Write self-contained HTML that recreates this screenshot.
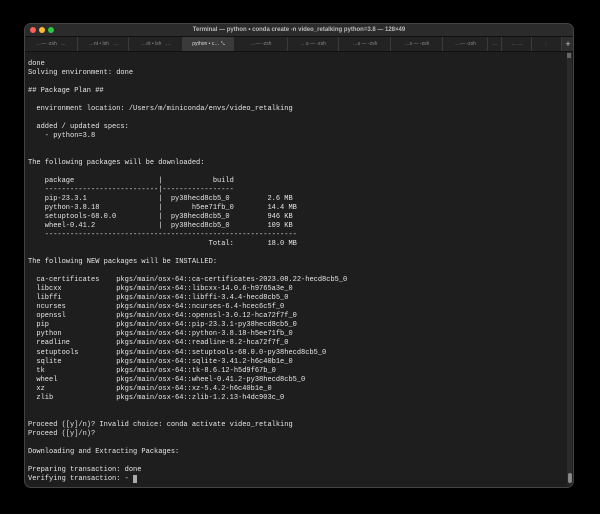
<!DOCTYPE html>
<html><head><style>
body{margin:0;background:#000;width:600px;height:514px;overflow:hidden;font-family:"Liberation Sans",sans-serif}
.win{position:absolute;left:25px;top:24px;width:548px;height:463px;background:#1e1e1e;border-radius:6px;overflow:hidden;box-shadow:0 0 0 1px #444}
.title{height:12px;background:#2b2b2b;color:#bbb;font-size:6px;text-align:center;line-height:12px;font-weight:bold}
.dot{position:absolute;top:3px;width:6px;height:6px;border-radius:50%}
.tabs{position:absolute;top:12px;left:0;right:0;height:14px;background:#232323;border-bottom:1px solid #111;border-top:1px solid #111}
.tab{position:absolute;top:0;height:14px;border-left:1px solid #3a3a3a;color:#888;font-size:5px;line-height:14px;text-align:center}
pre{position:absolute;left:3px;top:36px;margin:0;font-family:"Liberation Mono",monospace;font-size:7px;line-height:9.02px;color:#e6e6e6}
.sb{position:absolute;right:1px;top:28px;width:5px;height:433px;background:#2a2a2a}
.th{position:absolute;right:1px;bottom:4px;width:4px;height:10px;background:#888;border-radius:2px}
</style></head><body>
<div class="win">
<div class="title">Terminal — python • conda create -n video_retalking python=3.8 — 128×49</div>
<div class="dot" style="left:5px;background:#fe5f57"></div>
<div class="dot" style="left:14px;background:#febc2e"></div>
<div class="dot" style="left:23px;background:#28c840"></div>
<div class="tabs">
<div class="tab" style="left:0;width:52px;border:none">…— -zsh &nbsp; …</div>
<div class="tab" style="left:52px;width:51px">…nt • lsh &nbsp; …</div>
<div class="tab" style="left:103px;width:54px">…nt • lsh &nbsp; …</div>
<div class="tab" style="left:157px;width:51px;background:#3a3a3a;color:#ddd">python • c… ⤡</div>
<div class="tab" style="left:208px;width:54px">…— -zsh</div>
<div class="tab" style="left:262px;width:51px">…s — -zsh</div>
<div class="tab" style="left:313px;width:52px">…s — -zsh</div>
<div class="tab" style="left:365px;width:52px">…s — -zsh</div>
<div class="tab" style="left:417px;width:45px">…— -zsh</div>
<div class="tab" style="left:462px;width:14px">…</div>
<div class="tab" style="left:476px;width:30px">… …</div>
<div class="tab" style="left:506px;width:28px">⋮</div>
<div class="tab" style="left:536px;width:12px;color:#ccc;font-size:9px;background:#2e2e2e">+</div>
</div>
<div class="sb"><div style="width:4px;height:5px;background:#666;margin-top:1px"></div></div>
<div class="th"></div>
<pre>done
Solving environment: done

## Package Plan ##

  environment location: /Users/m/miniconda/envs/video_retalking

  added / updated specs:
    - python=3.8


The following packages will be downloaded:

    package                    |            build
    ---------------------------|-----------------
    pip-23.3.1                 |  py38hecd8cb5_0         2.6 MB
    python-3.8.18              |       h5ee71fb_0        14.4 MB
    setuptools-68.0.0          |  py38hecd8cb5_0         946 KB
    wheel-0.41.2               |  py38hecd8cb5_0         109 KB
    ------------------------------------------------------------
                                           Total:        18.0 MB

The following NEW packages will be INSTALLED:

  ca-certificates    pkgs/main/osx-64::ca-certificates-2023.08.22-hecd8cb5_0
  libcxx             pkgs/main/osx-64::libcxx-14.0.6-h9765a3e_0
  libffi             pkgs/main/osx-64::libffi-3.4.4-hecd8cb5_0
  ncurses            pkgs/main/osx-64::ncurses-6.4-hcec6c5f_0
  openssl            pkgs/main/osx-64::openssl-3.0.12-hca72f7f_0
  pip                pkgs/main/osx-64::pip-23.3.1-py38hecd8cb5_0
  python             pkgs/main/osx-64::python-3.8.18-h5ee71fb_0
  readline           pkgs/main/osx-64::readline-8.2-hca72f7f_0
  setuptools         pkgs/main/osx-64::setuptools-68.0.0-py38hecd8cb5_0
  sqlite             pkgs/main/osx-64::sqlite-3.41.2-h6c40b1e_0
  tk                 pkgs/main/osx-64::tk-8.6.12-h5d9f67b_0
  wheel              pkgs/main/osx-64::wheel-0.41.2-py38hecd8cb5_0
  xz                 pkgs/main/osx-64::xz-5.4.2-h6c40b1e_0
  zlib               pkgs/main/osx-64::zlib-1.2.13-h4dc903c_0


Proceed ([y]/n)? Invalid choice: conda activate video_retalking
Proceed ([y]/n)?

Downloading and Extracting Packages:

Preparing transaction: done
Verifying transaction: - <span style="background:#aaa">&nbsp;</span></pre>
</div>
</body></html>
